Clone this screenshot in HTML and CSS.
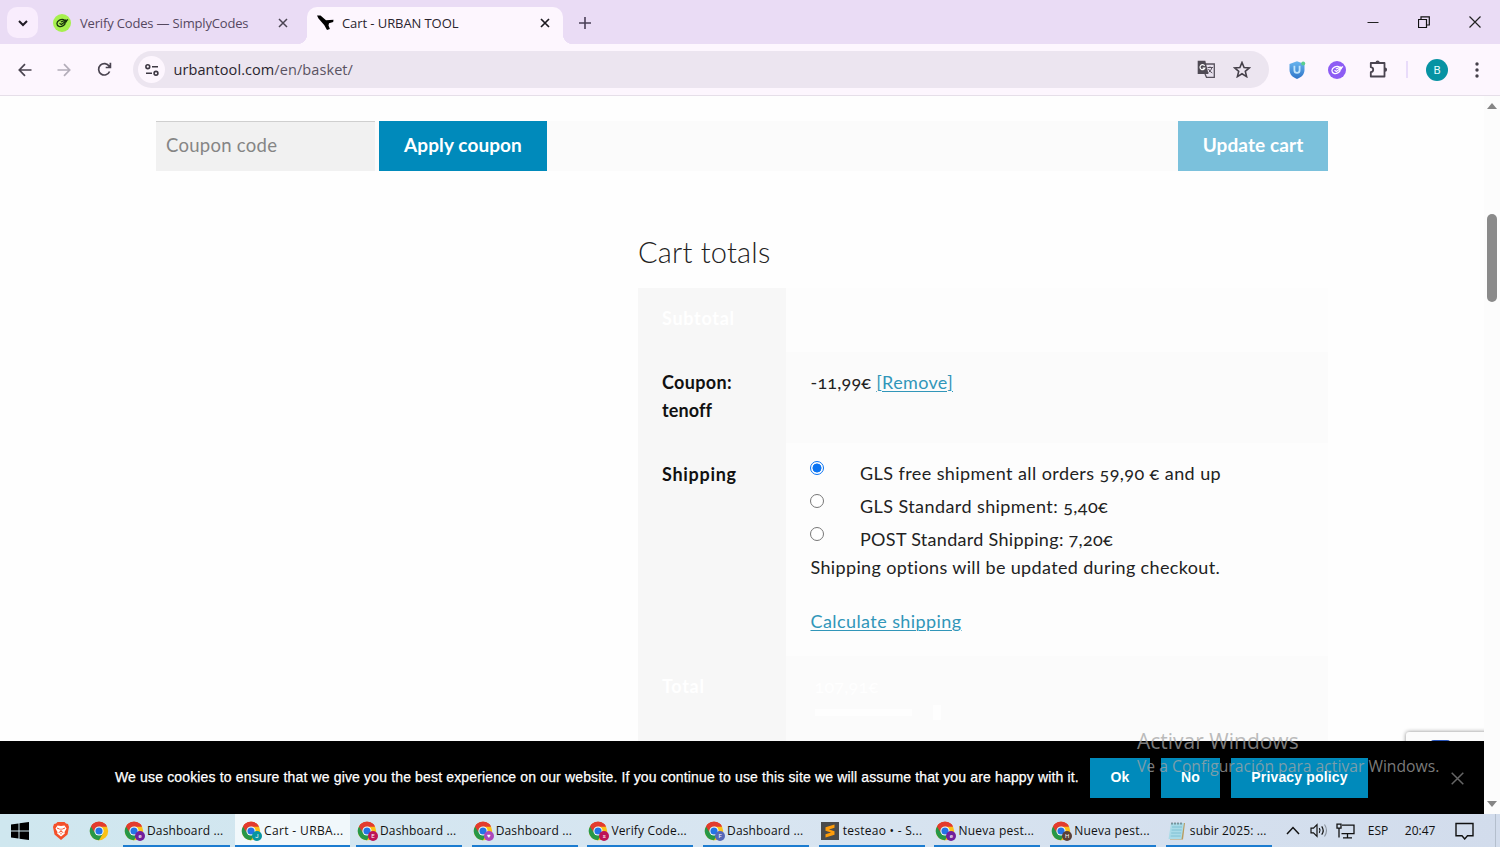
FILE: index.html
```html
<!DOCTYPE html>
<html lang="en">
<head>
<meta charset="utf-8">
<title>Cart - URBAN TOOL</title>
<link rel="stylesheet" href="styles.css">
</head>
<body>
<svg class="defs" width="0" height="0">
  <symbol id="chrome" viewBox="0 0 20 20">
    <circle cx="10" cy="10" r="9.2" fill="#fbc116"/>
    <path d="M10 10 2.03 5.4A9.2 9.2 0 0 1 17.97 5.4H10Z" fill="#e33b2e"/>
    <path d="M2.03 5.4A9.2 9.2 0 0 0 10 19.2L14 12.3 10 10Z" fill="#279847"/>
    <path d="M2.03 5.4 6 12.3 10 10V5.4Z" fill="#279847"/>
    <path d="M2.03 5.4A9.2 9.2 0 0 1 17.97 5.4H10A4.6 4.6 0 0 0 5.6 11.4Z" fill="#e33b2e"/>
    <circle cx="10" cy="10" r="4.6" fill="#fff"/>
    <circle cx="10" cy="10" r="3.6" fill="#2474e5"/>
  </symbol>
  <symbol id="code" viewBox="0 0 18 18">
    <path d="M11.500 5.800C8 4.600 4 6.600 3.900 9.600c0 3 3.600 3.500 5.900 2.300 2-1 2.600-2.300 2.200-3.700M6.500 9.300l1.900 1.200 6.600-5M7.800 8l5.500-2.200M11.800 8.300l2.200-.8" fill="none" stroke="currentColor" stroke-width="1.300"/>
  </symbol>
</svg>

<header class="tabstrip">
  <div class="tab-search"><svg width="12" height="12" viewBox="0 0 12 12"><path d="M2 4l4 4 4-4" fill="none" stroke="#1f1b24" stroke-width="2"/></svg></div>
  <div class="tab tab-idle">
    <svg class="fav-code" width="18" height="18"><circle cx="9" cy="9" r="9" fill="#a6f04e"/><use href="#code"/></svg>
    <span class="tab-title title-a">Verify Codes — SimplyCodes</span>
    <svg class="tab-x" width="10" height="10" viewBox="0 0 10 10"><path d="M1 1l8 8M9 1L1 9" stroke="#4a4452" stroke-width="1.500"/></svg>
  </div>
  <div class="tab tab-active">
    <svg class="fav-bird" width="17" height="16" viewBox="0 0 17 16"><path d="M0 .5 3.500.5 9 5.200 16.500 4.700 16.200 6.900 12 8.200 11.500 10.500 12.900 14 10 15 7.200 10 1.500 3.500Z" fill="#000"/></svg>
    <span class="tab-title title-b">Cart - URBAN TOOL</span>
    <svg class="tab-x" width="10" height="10" viewBox="0 0 10 10"><path d="M1 1l8 8M9 1L1 9" stroke="#1d1a20" stroke-width="1.700"/></svg>
  </div>
  <svg class="new-tab" width="12" height="12" viewBox="0 0 12 12"><path d="M6 0v12M0 6h12" stroke="#4a3f57" stroke-width="1.600"/></svg>
  <div class="win-controls">
    <svg width="12" height="12"><path d="M.5 6.500h11" stroke="#222"/></svg>
    <svg width="12" height="12"><path d="M.5 3.500h8v8h-8zM3 3.500V.8h8.300V9H8.500" fill="none" stroke="#111" stroke-width="1.200"/></svg>
    <svg width="12" height="12"><path d="M.5.5l11 11M11.500.5l-11 11" stroke="#222" stroke-width="1.200"/></svg>
  </div>
</header>

<nav class="toolbar">
  <svg class="nav-back" width="14" height="14" viewBox="0 0 14 14"><path d="M13.500 7H1.500M7 1.200 1.300 7 7 12.800" fill="none" stroke="#4a4450" stroke-width="1.700"/></svg>
  <svg class="nav-fwd" width="14" height="14" viewBox="0 0 14 14"><path d="M.5 7h12M7 1.200 12.700 7 7 12.800" fill="none" stroke="#b3adb9" stroke-width="1.700"/></svg>
  <svg class="nav-reload" width="15" height="15" viewBox="0 0 15 15"><path d="M12.600 9.500A5.700 5.700 0 1 1 12.200 4.300L13.300 5.400M13.400.8V5.500H8.700" fill="none" stroke="#4a4450" stroke-width="1.700"/></svg>
  <div class="omnibox">
    <div class="site-info"><svg width="14" height="12" viewBox="0 0 14 12"><g fill="none" stroke="#3d3843" stroke-width="1.600"><circle cx="2.800" cy="2.700" r="1.900"/><path d="M7 2.700h6M1 9.300h6"/><circle cx="11" cy="9.300" r="1.900"/></g></svg></div>
    <span class="url">urbantool.com<span class="url-path">/en/basket/</span></span>
    <svg class="translate" width="19" height="19" viewBox="0 0 19 19"><path d="M8 4h9.300v13.300H9.500L8 14" fill="#e9e2ef" stroke="#57515c" stroke-width="1.300"/><path d="M.7.800h7.600L11.500 14H.7Z" fill="#4f4a54"/><path d="M7.600 5.800A2.500 2.500 0 1 0 7.800 8.200H5.600" fill="none" stroke="#fff" stroke-width="1.200"/><path d="M10.500 7.500h5.500M13 6.500v1M15 7.500q-.8 3-3.500 5M11.500 9q1 2.500 3.800 4" fill="none" stroke="#57515c"/></svg>
    <svg class="star" width="18" height="17" viewBox="0 0 18 17"><path d="M9 1.500l2.100 5 5.300.4-4.100 3.500 1.300 5.200L9 12.800l-4.600 2.800 1.300-5.200L1.600 6.900l5.300-.4Z" fill="none" stroke="#454049" stroke-width="1.600"/></svg>
  </div>
  <svg class="ext-u" width="18" height="18" viewBox="0 0 18 18"><defs><linearGradient id="shield" x2="0" y2="1"><stop stop-color="#69b5ef"/><stop offset="1" stop-color="#2f74c8"/></linearGradient></defs><path d="M9 .3 16.500 3v6c0 4.500-3.500 7.500-7.500 9-4-1.500-7.500-4.500-7.500-9V3Z" fill="url(#shield)"/><path d="M6.400 4.800v4.400a2.600 2.600 0 0 0 5.200 0V4.800" fill="none" stroke="#bfe4fb" stroke-width="1.800"/><circle cx="15.200" cy="2.500" r="2" fill="#59ce8f"/></svg>
  <svg class="ext-code" width="18" height="18"><circle cx="9" cy="9" r="9" fill="#8d5cf4"/><use href="#code"/></svg>
  <svg class="ext-puzzle" width="19" height="19" viewBox="0 0 19 19"><path d="M1.800 3h13.700v13.500H1.800v-4.300c3.200-.5 3.200-4.500 0-5Z" fill="none" stroke="#4a4450" stroke-width="1.800" stroke-linejoin="round"/><path d="M6.500 2.500a2.100 2.100 0 0 1 4.200 0ZM16 7.600a2.100 2.100 0 0 1 0 4.200Z" fill="#4a4450"/></svg>
  <i class="tb-divider"></i>
  <div class="avatar">B</div>
  <svg class="kebab" width="4" height="16"><g fill="#454049"><circle cx="2" cy="2" r="1.700"/><circle cx="2" cy="8" r="1.700"/><circle cx="2" cy="14" r="1.700"/></g></svg>
</nav>

<main class="page">
  <div class="viewport">
    <div class="cart">
      <div class="actions">
        <div class="coupon-input">Coupon code</div>
        <button class="btn btn-apply">Apply coupon</button>
        <button class="btn btn-update">Update cart</button>
      </div>
      <section class="totals">
        <h2>Cart totals</h2>
        <div class="row row-sub"><div class="th faint">Subtotal</div><div class="td"></div></div>
        <div class="row row-coupon alt"><div class="th">Coupon:<br><span class="t-code">tenoff</span></div><div class="td"><span class="t-amount">-11,99€</span> <a class="t-remove">[Remove]</a></div></div>
        <div class="row row-ship"><div class="th t-ship">Shipping</div><div class="td">
          <div class="option"><i class="radio on"></i><span class="t-opt1">GLS free shipment all orders 59,90 € and up</span></div>
          <div class="option"><i class="radio"></i><span class="t-opt1">GLS Standard shipment: 5,40€</span></div>
          <div class="option"><i class="radio"></i><span class="t-opt3">POST Standard Shipping: 7,20€</span></div>
          <p class="note">Shipping options will be updated during checkout.</p>
          <a class="t-calc">Calculate shipping</a>
        </div></div>
        <div class="row row-total alt"><div class="th faint">Total</div><div class="td faint"><span class="t-amount t-sum">107,91€</span><div class="tax"><i></i><i></i></div></div></div>
      </section>
    </div>
    <div class="recaptcha"><i></i></div>
    <div class="cookie">
      <span class="cookie-text">We use cookies to ensure that we give you the best experience on our website. If you continue to use this site we will assume that you are happy with it.</span>
      <button class="cbtn c-ok">Ok</button><button class="cbtn c-no">No</button><button class="cbtn c-pp">Privacy policy</button>
      <svg class="cookie-x" width="13" height="13"><path d="M.7.700l11.600 11.600M12.300.7.700 12.300" stroke="#666" stroke-width="1.500"/></svg>
    </div>
  </div>
  <div class="scrollbar"><i class="up"></i><i class="thumb"></i><i class="down"></i></div>
</main>

<footer class="taskbar">
  <svg class="start" width="18" height="18" viewBox="0 0 18 18"><path d="M0 2.500 7.500 1.500V8.500H0ZM8.500 1.300 18 0V8.500H8.500ZM0 9.500h7.500v7L0 15.500ZM8.500 9.500H18V18L8.500 16.700Z"/></svg>
  <svg class="brave" width="16" height="18" viewBox="0 0 16 18"><path d="M4.500 0h7L13 1.500 15 2l1 3-1.500 7.500L8 18 1.500 12.500 0 5l1-3 2-.5Z" fill="#f4502a"/><path d="M4.500 3.500 8 4l3.500-.5 2 3-2 3.500.3 1.500L8 14.500 4.200 11.500 4.500 10l-2-3.500Z" fill="#fff"/><path d="M4 6l2.800 1.200M12 6 9.200 7.200M8 6.500v3M5.700 10.500 8 9.400l2.300 1.100M8 11v1.500" fill="none" stroke="#f4502a"/></svg>
  <svg class="chrome-pin" width="20" height="20"><use href="#chrome"/></svg>
  <div class="task first"><span class="ico purple"><svg width="20" height="20"><use href="#chrome"/></svg><b>e</b></span><span class="label t-dash">Dashboard ...</span></div>
  <div class="task current"><span class="ico teal"><svg width="20" height="20"><use href="#chrome"/></svg><b>J</b></span><span class="label t-cart">Cart - URBA...</span></div>
  <div class="tasks">
    <div class="task"><span class="ico crimson"><svg width="20" height="20"><use href="#chrome"/></svg><b>E</b></span><span class="label t-dash">Dashboard ...</span></div>
    <div class="task"><span class="ico orchid"><svg width="20" height="20"><use href="#chrome"/></svg><b>♥</b></span><span class="label t-dash">Dashboard ...</span></div>
    <div class="task"><span class="ico crimson"><svg width="20" height="20"><use href="#chrome"/></svg><b>s</b></span><span class="label t-verify">Verify Code...</span></div>
    <div class="task"><span class="ico slate"><svg width="20" height="20"><use href="#chrome"/></svg><b>F</b></span><span class="label t-dash">Dashboard ...</span></div>
    <div class="task"><span class="ico"><svg width="20" height="20" viewBox="0 0 20 20"><path d="M1 1h18v18H1Z" fill="#4b4b4b"/><path d="M14.500 3.500v3.300L9 8.500l5.500 1.800v3.400L5.500 16.500v-3.200l5.500-1.700-5.500-1.900V6.200Z" fill="#ff9d0a"/></svg></span><span class="label t-nueva">testeao • - S...</span></div>
    <div class="task"><span class="ico purple"><svg width="20" height="20"><use href="#chrome"/></svg><b>e</b></span><span class="label t-nueva">Nueva pest...</span></div>
    <div class="task"><span class="ico brown"><svg width="20" height="20"><use href="#chrome"/></svg><b>H</b></span><span class="label t-nueva">Nueva pest...</span></div>
    <div class="task"><span class="ico"><svg width="20" height="20" viewBox="0 0 20 20"><path d="M5 2h13l-2 16.500H3Z" fill="#b99b5f"/><path d="M4 2h13l-2.500 16H1.500Z" fill="#a9dbe8"/><path d="M5 6h10M4.600 9h10M4.200 12h10M3.700 15h10" stroke="#7fc0d2"/><path d="M5 1.500v2M8 1.500v2M11 1.500v2M14 1.500v2" stroke="#56666b" stroke-width="1.200"/></svg></span><span class="label t-dash">subir 2025: ...</span></div>
  </div>
  <div class="tray">
    <svg class="tr-up" width="14" height="9"><path d="M1 8l6-6.500L13 8" fill="none" stroke="#111" stroke-width="1.500"/></svg>
    <svg class="tr-vol" width="18" height="15" viewBox="0 0 18 15"><path d="M1 5.200h2.500l3.500-3.500v11.600L3.500 9.800H1Z" fill="none" stroke="#111" stroke-width="1.200"/><path d="M9.300 5.200q1.600 2.300 0 4.600M11.700 3.300q3 4.200 0 8.400" fill="none" stroke="#111" stroke-width="1.200"/><path d="M14.500 1.500q4 6 0 12" fill="none" stroke="#8a929c" stroke-width="1.100"/></svg>
    <svg class="tr-net" width="19" height="16" viewBox="0 0 19 16"><path d="M6 2.200h12v8.500H5.500M11.500 11v3.500M7 14.800h9M1 1.200h4v4H1ZM3 5v9.500" fill="none" stroke="#111" stroke-width="1.300"/></svg>
    <span class="lang">ESP</span>
    <span class="clock">20:47</span>
    <svg class="tr-note" width="19" height="18"><path d="M1 1.500h17v12.300h-5.500L9.700 17 7 13.800H1Z" fill="none" stroke="#111" stroke-width="1.400"/></svg>
  </div>
</footer>
<div class="watermark"><div class="wm-title">Activar Windows</div><div class="wm-sub">Ve a Configuración para activar Windows.</div></div>
</body>
</html>
```
FILE: styles.css
```css
* { box-sizing: border-box; }
body { margin: 0; width: 1500px; height: 847px; overflow: hidden; display: flex; flex-direction: column; position: relative; background: #fff; font-family: "Open Sans", "Noto Sans", sans-serif; }
svg { display: block; flex: none; }
i, b { font-style: normal; flex: none; }
button { border: 0; padding: 0; font: inherit; letter-spacing: inherit; }
.defs { position: absolute; }

/* Tab strip */
.tabstrip { height: 44px; flex: none; background: #eadcf5; display: flex; align-items: center; padding-left: 7px; }
.tab-search { width: 31px; height: 31px; border-radius: 10px; background: #f9edfd; display: grid; place-items: center; margin-top: 1px; }
.tab { display: flex; align-items: center; height: 37px; margin-top: 7px; padding-bottom: 5px; font-size: 13px; white-space: nowrap; }
.tab-idle { width: 269px; padding: 0 19px 5px 15px; color: #55485f; }
.tab-active { width: 256px; padding: 0 13px 5px 10px; background: #fdf6fe; border-radius: 10px 10px 0 0; color: #2a252e; position: relative; }
.tab-active::before, .tab-active::after { content: ""; position: absolute; bottom: 0; width: 10px; height: 10px; }
.tab-active::before { left: -10px; background: radial-gradient(circle at 0 0, #eadcf5 10px, #fdf6fe 10.500px); }
.tab-active::after { right: -10px; background: radial-gradient(circle at 100% 0, #eadcf5 10px, #fdf6fe 10.500px); }
.tab-title { margin-left: 8px; }
.title-a { margin-left: 9px; letter-spacing: -.17px; }
.title-b { letter-spacing: -.08px; }
.tab-x { margin-left: auto; }
.fav-code { color: #17330b; }
.new-tab { margin: 1px 0 0 16px; }
.win-controls { margin-left: auto; display: flex; gap: 39px; padding-right: 19px; }

/* Toolbar */
.toolbar { height: 52px; flex: none; background: #fdf6fe; border-bottom: 1px solid #e6dfe9; display: flex; align-items: center; padding-left: 18px; }
.nav-fwd { margin-left: 25px; }
.nav-reload { margin-left: 26px; }
.omnibox { margin-left: 21px; width: 1136px; height: 37px; border-radius: 19px; background: #ece5f0; display: flex; align-items: center; padding-left: 5px; }
.site-info { width: 27px; height: 27px; border-radius: 50%; background: #fdf6fe; display: grid; place-items: center; }
.url { margin-left: 8.500px; font-size: 14.500px; letter-spacing: .08px; color: #2a252e; white-space: nowrap; }
.url-path { color: #5a5362; }
.translate { margin-left: auto; }
.star { margin: 0 18px 0 17px; }
.ext-u { margin-left: 19px; }
.ext-code { margin-left: 22px; color: #fff; }
.ext-puzzle { margin-left: 23px; }
.tb-divider { width: 2px; height: 17px; background: #e9dcfa; margin-left: 18px; }
.avatar { width: 22px; height: 22px; border-radius: 50%; background: #0793a3; color: #e5fbfd; font: 11.500px/22px Roboto, sans-serif; text-align: center; margin-left: 18px; }
.kebab { margin-left: 27px; }

/* Page */
.page { height: 718px; flex: none; display: flex; }
.viewport { width: 1484px; position: relative; overflow: hidden; background: #fefefe; font-family: Lato, sans-serif; font-variant-numeric: oldstyle-nums; }
.cart { padding: 25px 156px 0; display: flex; flex-direction: column; }
.actions { height: 50px; background: #fbfbfb; display: flex; color: #fff; font-size: 19px; letter-spacing: .1px; }
.coupon-input { width: 219px; background: #f1f1f1; border-top: 1px solid #cfcfcf; color: #858585; font-size: 18.500px; letter-spacing: .28px; line-height: 46px; padding-left: 10px; }
.btn { height: 50px; color: #fff; font-weight: 700; background: #008abb; white-space: nowrap; padding-bottom: 3px; }
.btn-apply { width: 168px; margin-left: 4px; }
.btn-update { width: 150px; margin-left: auto; background: #7bc1dc; }
.totals { width: 690px; margin-left: 482px; font-size: 18px; letter-spacing: .35px; line-height: 27.500px; color: #222; }
h2 { margin: 0; padding: 59px 0 12px; height: 117px; font-size: 29px; font-weight: 300; letter-spacing: .2px; line-height: 44px; color: #222; }
.row { display: grid; grid-template-columns: 148px 542px; }
.row-sub { height: 64px; }
.row-coupon { height: 91px; }
.row-ship { height: 213px; }
.row-total { height: 86px; }
.th { background: #f7f7f7; font-weight: 700; color: #111; padding: 17px 24px; }
.t-code { letter-spacing: .1px; }
.t-ship { padding-top: 18px; letter-spacing: .7px; }
.td { background: #fdfdfd; padding: 17px 24.500px; white-space: nowrap; }
.alt .td { background: #fbfbfb; }
.th.faint, .alt .td.faint { color: #fff; }
.th.faint { letter-spacing: .7px; }
.t-amount { letter-spacing: .2px; }
.t-sum { margin-left: 4px; }
.t-opt1 { letter-spacing: .42px; }
.tax { display: flex; justify-content: space-between; width: 126px; margin: 4px 0 0 4px; align-items: center; }
.tax i { width: 97px; height: 7px; background: #fefefe; }
.tax i + i { width: 8px; height: 15px; }
.totals a { color: #3196b9; text-decoration: underline; text-decoration-thickness: 1px; text-underline-offset: 2px; }
.option { display: flex; height: 33px; }
.radio { width: 14px; height: 14px; border: 1px solid #777; border-radius: 50%; background: #fff; margin: 1px 36px 0 -.5px; }
.radio.on { border-color: #0b74f2; background: radial-gradient(circle, #0b74f2 4.200px, #fff 4.800px); }
.t-opt3 { letter-spacing: .3px; }
.note { margin: -5px 0 26px; }
.t-calc { letter-spacing: .42px; }

.recaptcha { position: absolute; left: 1406px; top: 636px; width: 90px; height: 60px; background: #fbfbfb; box-shadow: 0 0 4px #888; border-radius: 3px; display: flex; padding: 8px 23px; }
.recaptcha i { width: 23px; height: 12px; background: #2853b6; border-radius: 5px 5px 0 0; }
.cookie { position: absolute; left: 0; right: 0; bottom: 0; height: 73px; background: #000; color: #fff; display: flex; align-items: center; padding-left: 115px; font: 14px "Liberation Sans", sans-serif; letter-spacing: .15px; }
.cookie-text { width: 963px; margin-right: 12px; padding-bottom: 1px; white-space: nowrap; letter-spacing: .152px; -webkit-text-stroke: .25px #fff; }
.cbtn { height: 40px; background: #008abb; color: #fff; font-weight: 700; padding-bottom: 2px; }
.c-ok { width: 60px; }
.c-no { width: 59px; margin-left: 11px; }
.c-pp { width: 137px; margin-left: 11px; }
.cookie-x { margin: 2px 0 0 83px; }

.scrollbar { width: 16px; background: #fcfcfc; display: flex; flex-direction: column; align-items: center; padding: 7px 0 7px; }
.up, .down { border: 5px solid transparent; border-top: 0; border-bottom: 6px solid #858585; }
.down { border-top: 6px solid #858585; border-bottom: 0; margin-top: auto; }
.thumb { width: 10px; height: 88px; margin-top: 105px; border-radius: 5px; background: #8a8a8a; }

/* Taskbar */
.taskbar { height: 33px; flex: none; display: flex; align-items: center; background: linear-gradient(90deg, #cfe7ef, #d8e5f1 50%, #d2dcec); padding-left: 11px; color: #111; font-size: 12px; }
.brave { margin-left: 24px; }
.chrome-pin { margin-left: 20px; }
.task { width: 106px; height: 33px; border-bottom: 2px solid #1c7cd0; display: flex; align-items: center; padding: 2px 0 0 1px; white-space: nowrap; }
.task.first { width: 107px; margin-left: 14px; }
.task.current { width: 115px; margin: 0 6px 0 5px; padding-left: 6px; background: #f1f8fb; }
.tasks { display: grid; grid-template-columns: repeat(8, 106px); column-gap: 9.700px; }
.ico { width: 20px; height: 20px; position: relative; margin-right: 3px; flex: none; }
.ico b { position: absolute; right: -1px; bottom: 0; width: 10px; height: 10px; border-radius: 50%; color: #fff; font: 6px/10px Roboto, sans-serif; text-align: center; }
.t-dash { letter-spacing: .14px; }
.t-cart { letter-spacing: .36px; }
.t-verify { letter-spacing: .16px; }
.t-nueva { letter-spacing: .26px; }
.purple b { background: #711f9c; }
.teal b { background: #0895a0; }
.crimson b { background: #bd1556; }
.orchid b { background: #ab47bc; }
.slate b { background: #5668b8; }
.brown b { background: #5a4038; }
.tray { display: flex; align-items: center; flex: 1; height: 33px; margin: 0 4px 0 14px; border-right: 1px solid #b4bfcd; }
.tr-vol { margin-left: 10px; }
.tr-net { margin-left: 8px; }
.lang { width: 20px; margin-left: 13px; }
.clock { width: 31px; margin-left: 17px; }
.tr-note { margin-left: 19px; }

/* System activation notice laid over the desktop */
.watermark { position: absolute; left: 1137px; top: 728px; color: rgba(165,165,165,.75); white-space: nowrap; }
.wm-title { font-size: 21px; line-height: 27px; }
.wm-sub { font-size: 15.700px; line-height: 22px; }
```
